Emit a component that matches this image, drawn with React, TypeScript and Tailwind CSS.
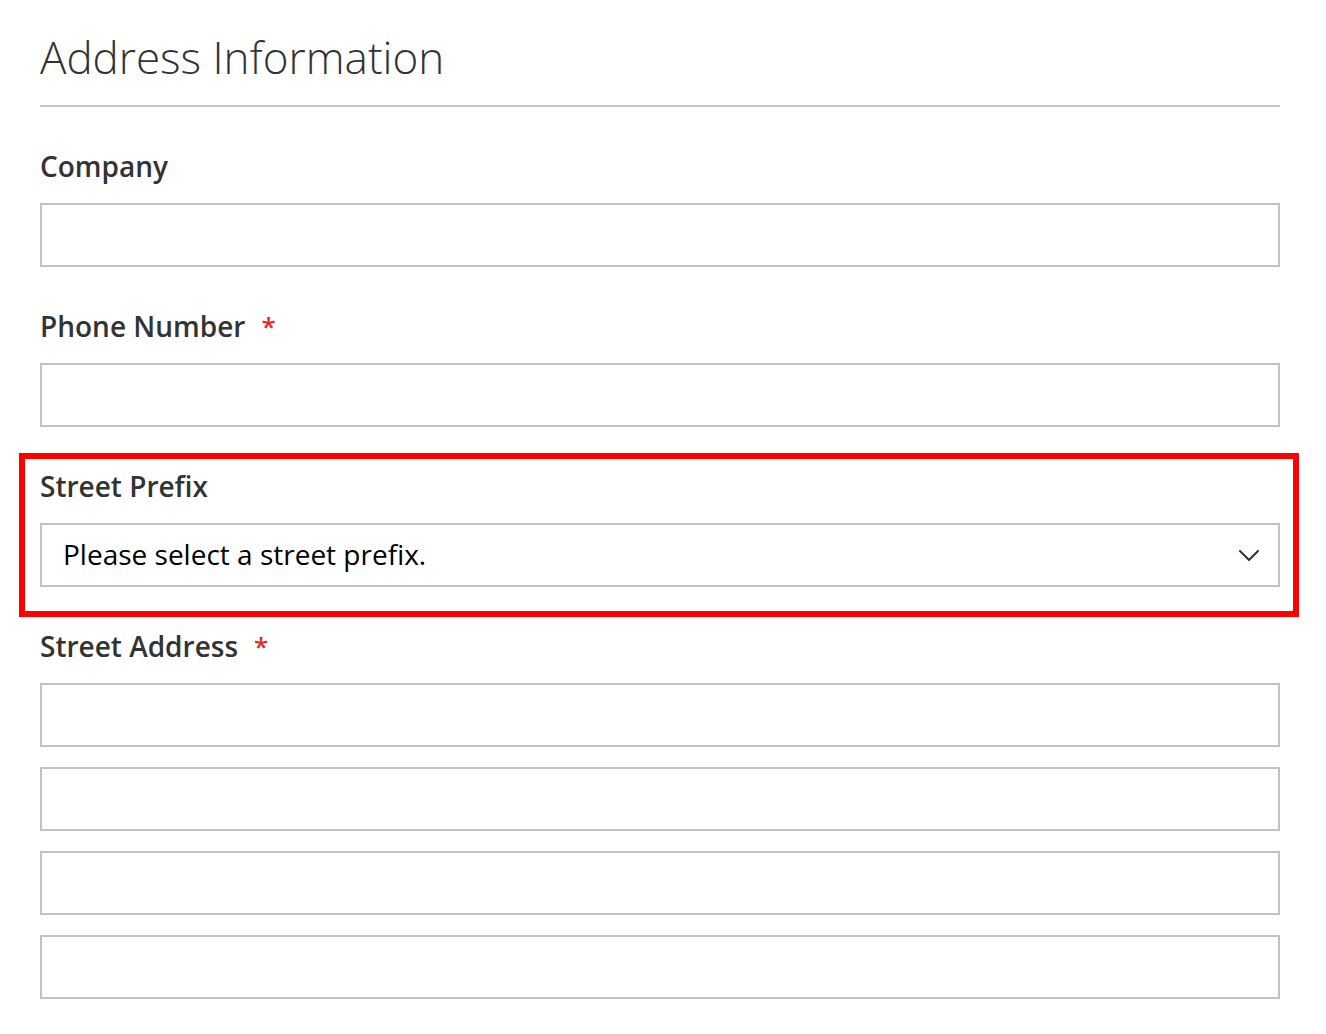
const font = { fontFamily: '"Open Sans", "Liberation Sans", sans-serif' };

function Label({ text, required }: { text: string; required?: boolean }) {
  return (
    <label className="flex items-start h-[38px] leading-[36px] text-[28px] font-semibold text-[#333333] mb-[17px]">
      <span>{text}</span>
      {required && <span className="ml-[16px] text-[#e02b27] text-[26px]">*</span>}
    </label>
  );
}

function Input({ last }: { last?: boolean }) {
  return (
    <input
      type="text"
      className={
        "block w-full h-[64px] border-2 border-[#c2c2c2] bg-white outline-none " +
        (last ? "" : "mb-[20px]")
      }
    />
  );
}

function Field({ label, required }: { label: string; required?: boolean }) {
  return (
    <div className="mb-[41px]">
      <Label text={label} required={required} />
      <Input last />
    </div>
  );
}

export default function App() {
  return (
    <div className="min-h-screen bg-white" style={font}>
      <div className="ml-[40px] w-[1240px] pt-[27px]">
        <div className="border-b-2 border-[#c6c6c6] pb-[18px] mb-[41px]">
          <h2 className="text-[44px] leading-[60px] font-light text-[#333333]">
            Address Information
          </h2>
        </div>

        <Field label="Company" />
        <Field label="Phone Number" required />

        <div className="-mt-[15px] mb-[11px] -ml-[21px] -mr-[19px] border-[6px] border-[#ff0000] pt-[9px] pb-[24px] pl-[15px] pr-[13px]">
          <Label text="Street Prefix" />
          <div className="h-[64px] border-2 border-[#c2c2c2] bg-white flex items-center pl-[21px] pr-[19px]">
            <span className="flex-1 text-[28px] text-black leading-none pb-[3px]">
              Please select a street prefix.
            </span>
            <svg width="20" height="12" viewBox="0 0 20 12" fill="none" className="mt-[2px]">
              <polyline
                points="1,1 10,10 19,1"
                stroke="#333333"
                strokeWidth="2"
                strokeLinecap="round"
                strokeLinejoin="round"
              />
            </svg>
          </div>
        </div>

        <div>
          <Label text="Street Address" required />
          <Input />
          <Input />
          <Input />
          <Input last />
        </div>
      </div>
    </div>
  );
}
